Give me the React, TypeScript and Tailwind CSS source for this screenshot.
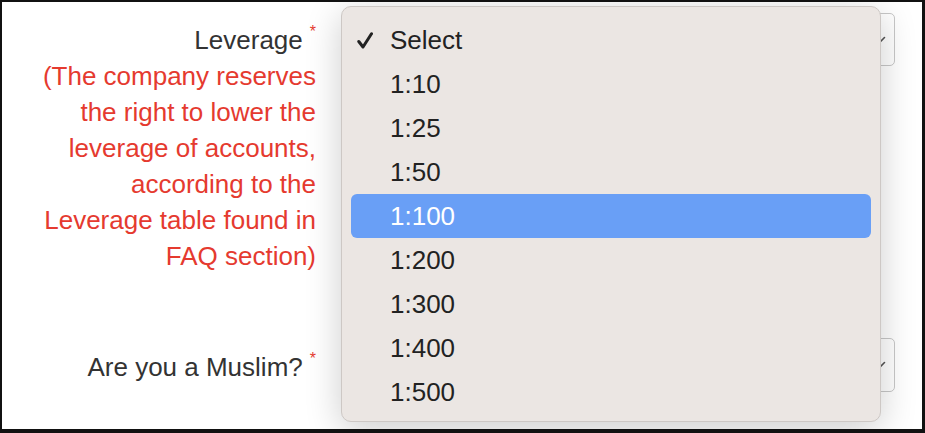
const options = ["1:10", "1:25", "1:50", "1:100", "1:200", "1:300", "1:400", "1:500"];

const note = [
  "(The company reserves",
  "the right to lower the",
  "leverage of accounts,",
  "according to the",
  "Leverage table found in",
  "FAQ section)",
];

function Chevron() {
  return (
    <svg width="14" height="10" viewBox="0 0 14 10" className="absolute right-[8px] top-1/2 -translate-y-1/2">
      <path d="M1.5 2.5 L7 8 L12.5 2.5" fill="none" stroke="#555" strokeWidth="1.6" strokeLinecap="round" />
    </svg>
  );
}

function Required() {
  return <span className="ml-[7px] align-top text-[16px] leading-[20px] text-[#e53a2f]">*</span>;
}

export default function App() {
  const selected = "1:100";

  return (
    <div className="relative w-[925px] h-[433px] bg-white border-2 border-r-[3px] border-b-[4px] border-[#111] font-['Liberation_Sans',Arial,sans-serif] overflow-hidden">
      <div className="flex flex-col pt-[11px]">
        <div className="flex items-start">
          <div className="w-[314px] text-right pt-[9px] text-[26px] leading-[36px]">
            <div className="text-[#333]">
              Leverage
              <Required />
            </div>
            <div className="text-[#e53a2f]">
              {note.map((line) => (
                <div key={line}>{line}</div>
              ))}
            </div>
          </div>
          <div className="relative ml-[25px] w-[554px] h-[53px] rounded-[5px] border border-[#c8c8c8] bg-white">
            <Chevron />
          </div>
        </div>

        <div className="flex items-start mt-[64px]">
          <div className="w-[314px] text-right pt-[11px] text-[26px] leading-[36px] text-[#333]">
            Are you a Muslim?
            <Required />
          </div>
          <div className="relative ml-[25px] w-[554px] h-[54px] rounded-[5px] border border-[#c8c8c8] bg-white">
            <Chevron />
          </div>
        </div>
      </div>

      {/* open native select menu */}
      <div className="absolute left-[339px] top-[4px] w-[540px] h-[416px] rounded-[10px] border border-[#cdc8c5] bg-[#ebe6e3] shadow-[0_8px_36px_rgba(0,0,0,0.2)] px-[9px] pt-[11px]">
        <div className="flex items-center h-[44px] text-[26px] text-[#222]">
          <svg width="16" height="17" viewBox="0 0 16 17" className="ml-[6px] mr-[17px]">
            <path d="M1.8 9.5 L6 15 L14.5 1.8" fill="none" stroke="#222" strokeWidth="3" strokeLinecap="round" strokeLinejoin="round" />
          </svg>
          Select
        </div>
        {options.map((o) => (
          <div
            key={o}
            className={
              o === selected
                ? "flex items-center h-[44px] pl-[39px] rounded-[6px] bg-[#699ff6] text-white text-[26px]"
                : "flex items-center h-[44px] pl-[39px] text-[26px] text-[#222]"
            }
          >
            {o}
          </div>
        ))}
      </div>
    </div>
  );
}
